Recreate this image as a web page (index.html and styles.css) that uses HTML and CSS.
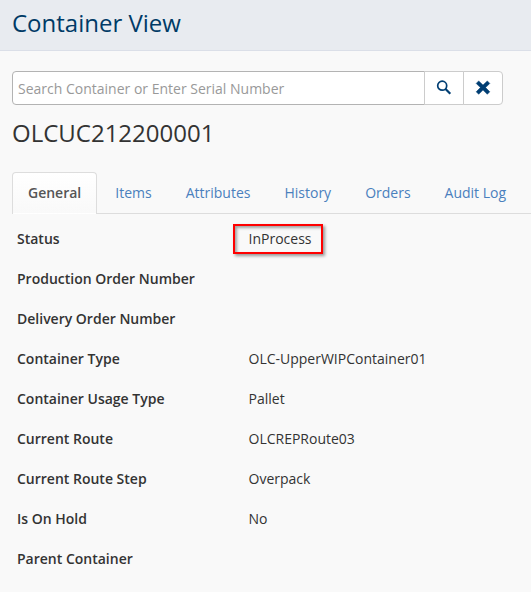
FILE: index.html
```html
<!DOCTYPE html>
<html lang="en">
<head>
<meta charset="utf-8">
<title>Container View</title>
<link rel="stylesheet" href="styles.css">
</head>
<body>
<header class="page-header"><h1>Container View</h1></header>
<main>
<div class="search">
<input type="text" placeholder="Search Container or Enter Serial Number">
<button class="find" aria-label="Search"><svg width="16" height="16" viewBox="0 0 16 16"><circle cx="6.2" cy="5.7" r="4.5" fill="none" stroke="currentColor" stroke-width="1.7"/><path d="M9.3 8.8l5 4.9" stroke="currentColor" stroke-width="2.2"/></svg></button>
<button class="clear" aria-label="Clear"><svg width="16" height="16" viewBox="0 0 16 16"><path d="M3.7 .9L8 5.1 12.3 .9l2.5 2.5L10.6 7.6l4.2 4.2-2.5 2.5L8 10.1l-4.3 4.2-2.5-2.5 4.2-4.2-4.2-4.2z" fill="currentColor" stroke="currentColor" stroke-width=".5" stroke-linejoin="round"/></svg></button>
</div>
<h2>OLCUC212200001</h2>
<nav class="tabs"><a class="active">General</a><a>Items</a><a>Attributes</a><a>History</a><a>Orders</a><a>Audit Log</a></nav>
<dl>
<dt>Status</dt><dd><span class="marked">InProcess</span></dd>
<dt>Production Order Number</dt><dd></dd>
<dt>Delivery Order Number</dt><dd></dd>
<dt>Container Type</dt><dd>OLC-UpperWIPContainer01</dd>
<dt>Container Usage Type</dt><dd>Pallet</dd>
<dt>Current Route</dt><dd>OLCREPRoute03</dd>
<dt>Current Route Step</dt><dd>Overpack</dd>
<dt>Is On Hold</dt><dd>No</dd>
<dt>Parent Container</dt><dd></dd>
</dl>
</main>
</body>
</html>
```
FILE: styles.css
```css
* { box-sizing: border-box; }
body { margin: 0; height: 592px; overflow: hidden; background: #f9f9f9; color: #333; font: 14px/20px "Open Sans", sans-serif; }
.page-header { height: 51px; padding: 6px 12px; background: #e8ebf0; border-bottom: 1px solid #dbdfe8; }
h1, h2 { margin: 0; font-weight: 400; font-size: 24px; line-height: 33px; }
h1 { color: #003a66; }
main { padding: 20px 0 0 12px; }
.search { display: flex; width: 491px; height: 34px; }
.search input { flex: 1; min-width: 0; padding: 2px 5px 0; border: 1px solid #b3b3b3; border-radius: 4px 0 0 4px; background: #fff; font: inherit; }
.search input::placeholder { color: #999; opacity: 1; }
.search button { display: flex; align-items: center; justify-content: center; width: 40px; margin-left: -1px; padding: 0; border: 1px solid #ccc; background: #fff; color: #003e73; }
.search .clear { border-radius: 0 4px 4px 0; }
h2 { margin-top: 11px; }
.tabs { display: flex; height: 42px; margin-top: 23px; border-bottom: 1px solid #ddd; }
.tabs a { height: 42px; margin-right: 2px; padding: 11px 16px; color: #4a80bd; white-space: nowrap; }
.tabs .active { border: 1px solid #ddd; border-bottom-color: transparent; border-radius: 4px 4px 0 0; padding: 10px 15px; background: linear-gradient(#fff, #f9f9f9); color: #555; font-weight: 600; }
dl { display: grid; grid-template-columns: 231.5px 1fr; grid-auto-rows: 40px; margin: 5px 0 0 5px; line-height: 40px; }
dt { font-weight: 600; }
dd { margin: 0; }
.marked { position: relative; }
.marked::after { content: ""; position: absolute; inset: -5px -12px -6px -16px; border: 2px solid #f00; box-shadow: 2px 2px 3px rgba(0, 0, 0, .4), inset 2px 2px 3px rgba(0, 0, 0, .35); }
```
